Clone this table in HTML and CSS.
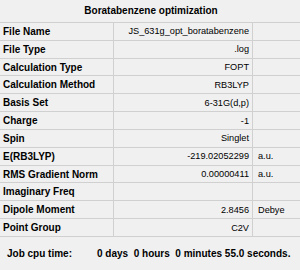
FILE: index.html
```html
<!DOCTYPE html>
<html>
<head>
<meta charset="utf-8">
<link rel="stylesheet" href="styles.css">
</head>
<body>
<div class="panel">
  <div class="title">Boratabenzene optimization</div>
  <div class="grid">
    <div class="lbl">File Name</div><div class="val">JS_631g_opt_boratabenzene</div><div class="unit"></div>
    <div class="lbl">File Type</div><div class="val">.log</div><div class="unit"></div>
    <div class="lbl">Calculation Type</div><div class="val">FOPT</div><div class="unit"></div>
    <div class="lbl">Calculation Method</div><div class="val">RB3LYP</div><div class="unit"></div>
    <div class="lbl">Basis Set</div><div class="val">6-31G(d,p)</div><div class="unit"></div>
    <div class="lbl">Charge</div><div class="val">-1</div><div class="unit"></div>
    <div class="lbl">Spin</div><div class="val">Singlet</div><div class="unit"></div>
    <div class="lbl">E(RB3LYP)</div><div class="val">-219.02052299</div><div class="unit">a.u.</div>
    <div class="lbl">RMS Gradient Norm</div><div class="val">0.00000411</div><div class="unit">a.u.</div>
    <div class="lbl">Imaginary Freq</div><div class="val"></div><div class="unit"></div>
    <div class="lbl">Dipole Moment</div><div class="val">2.8456</div><div class="unit">Debye</div>
    <div class="lbl">Point Group</div><div class="val">C2V</div><div class="unit"></div>
  </div>
  <div class="footer"><span class="flabel">Job cpu time:</span><span class="ftime">0 days  0 hours  0 minutes 55.0 seconds.</span></div>
</div>
</body>
</html>
```
FILE: styles.css
```css
html, body {
  margin: 0;
  padding: 0;
  background: #f0f0f0;
}
.panel {
  width: 300px;
  height: 270px;
  font-family: "Liberation Sans", Arial, sans-serif;
  color: #000;
  background: #f0f0f0;
}
.title {
  height: 22px;
  line-height: 22px;
  text-align: center;
  font-weight: bold;
  font-size: 10px;
  padding-left: 2px;
  box-sizing: border-box;
}
.grid {
  display: grid;
  grid-template-columns: 114px 139px 1fr;
  grid-auto-rows: 17.833px;
  border-top: 1px solid #d0d0d0;
  border-bottom: 0;
}
.grid > div {
  box-sizing: border-box;
  border-bottom: 1px solid #d0d0d0;
  display: flex;
  align-items: center;
  white-space: nowrap;
  overflow: hidden;
}
.lbl {
  font-weight: bold;
  font-size: 10px;
  padding-left: 3px;
  border-right: 1px solid #d0d0d0;
}
.val {
  font-size: 9.2px;
  justify-content: flex-end;
  padding-right: 3px;
  border-right: 1px solid #d0d0d0;
}
.unit {
  font-size: 9.2px;
  padding-left: 5px;
}
.footer {
  display: flex;
  align-items: center;
  height: 34px;
  padding-left: 7px;
  font-weight: bold;
  font-size: 10px;
  white-space: pre;
}
.flabel {
  width: 90px;
}
```
